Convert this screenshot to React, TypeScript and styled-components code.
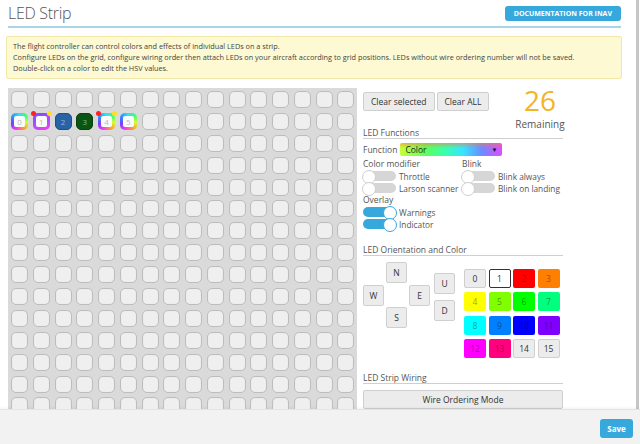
import React from "react";
import styled, { createGlobalStyle, css } from "styled-components";

const GlobalStyle = createGlobalStyle`
  html, body {
    margin: 0;
    padding: 0;
    background: #ffffff;
    font-family: "Open Sans", "Liberation Sans", sans-serif;
    color: #555;
  }
  * { box-sizing: border-box; }
`;

const Page = styled.div`
  width: 640px;
  height: 444px;
  display: flex;
  flex-direction: column;
  overflow: hidden;
`;

const Main = styled.div`
  flex: 1;
  display: flex;
  min-height: 0;
`;

const Content = styled.div`
  flex: 1;
  overflow: hidden;
`;

const ScrollBar = styled.div`
  width: 3px;
  margin-right: 1px;
  background: #c6c6c6;
`;

const Header = styled.div`
  margin: 0 15px 0 8px;
  height: 28px;
  display: flex;
  align-items: center;
  justify-content: space-between;
  border-bottom: 2px solid #a9d4e6;
`;

const Title = styled.h1`
  margin: 0;
  font-size: 16px;
  font-weight: 300;
  color: #555;
  letter-spacing: -0.3px;
`;

const DocButton = styled.a`
  background: #37a8db;
  color: #fff;
  font-size: 7px;
  font-weight: 700;
  text-transform: uppercase;
  padding: 0 9px;
  height: 15px;
  line-height: 15px;
  border-radius: 3px;
  text-decoration: none;
`;

const Notice = styled.div`
  margin: 8px 14px 0 6px;
  padding: 4px 6px;
  background: #fdf9d2;
  border: 1px solid #f1e7a6;
  border-radius: 2px;
  font-size: 7.3px;
  line-height: 11px;
  color: #444;
`;

const Body = styled.div`
  display: flex;
  gap: 6px;
  margin-top: 9px;
  padding-left: 8px;
  align-items: flex-start;
`;

const Grid = styled.div`
  background: #dadada;
  padding: 3px;
  display: grid;
  grid-template-columns: repeat(16, 17px);
  column-gap: 4.75px;
  row-gap: 4.9px;
  width: 349px;
`;

const rainbow = css`
  background: conic-gradient(from 200deg, #ff3cf0, #7d3cff, #2f8cff, #2fe0ff, #37ff7a, #d6ff2f, #ff9a2f, #ff3cf0);
  border: none;
  padding: 3px;
`;

const Cell = styled.div<{ $kind?: string }>`
  position: relative;
  width: 17px;
  height: 17px;
  border-radius: 5px;
  border: 1px solid #bdbdbd;
  background: #efefef;
  box-shadow: inset 0 0 1px rgba(0, 0, 0, 0.08);
  display: flex;
  align-items: center;
  justify-content: center;
  font-size: 8px;
  ${(p) => p.$kind === "rainbow" && rainbow}
  ${(p) =>
    p.$kind === "purple" &&
    css`
      background: linear-gradient(160deg, #7a4cff, #b14cff 55%, #ff3cf4);
      border: none;
      padding: 3px;
    `}
  ${(p) =>
    p.$kind === "blue" &&
    css`
      background: #2763a6;
      border-color: #1d4f87;
      color: #8fb6e4;
    `}
  ${(p) =>
    p.$kind === "green" &&
    css`
      background: #0b5512;
      border-color: #08420d;
      color: #7ebd80;
    `}
`;

const LedInner = styled.span`
  width: 100%;
  height: 100%;
  background: #fbfbfb;
  border-radius: 2px;
  color: #b8b8b8;
  font-size: 8px;
  display: flex;
  align-items: center;
  justify-content: center;
`;

const Dot = styled.span<{ $side: "left" | "right"; $color: string }>`
  position: absolute;
  top: -2px;
  ${(p) => (p.$side === "left" ? "left: -2px;" : "right: -2px;")}
  width: 5px;
  height: 5px;
  border-radius: 50%;
  background: ${(p) => p.$color};
`;

const Panel = styled.div`
  width: 202px;
  padding-top: 4px;
  display: flex;
  flex-direction: column;
  font-size: 8.5px;
`;

const TopRow = styled.div`
  height: 37px;
  display: flex;
  justify-content: space-between;
  align-items: flex-start;
`;

const BtnGroup = styled.div`
  display: flex;
  gap: 2px;
`;

const Button = styled.button`
  font-family: inherit;
  font-size: 8.5px;
  color: #333;
  background: #ececec;
  border: 1px solid #cfcfcf;
  border-radius: 2px;
  height: 19px;
  padding: 0 7px;
  cursor: pointer;
`;

const Remaining = styled.div`
  display: flex;
  flex-direction: column;
  align-items: center;
  margin-top: -7px;
  width: 50px;
`;

const Big = styled.div`
  font-size: 28px;
  font-weight: 400;
  color: #f3b425;
  line-height: 30px;
`;

const Small = styled.div`
  font-size: 10px;
  line-height: 12px;
  margin-top: 3px;
  color: #555;
`;

const SectionTitle = styled.div<{ $top: number }>`
  margin-top: ${(p) => p.$top}px;
  font-size: 8.5px;
  line-height: 10px;
  color: #555;
  border-bottom: 1px solid #cfcfcf;
  width: 200px;
`;

const FuncRow = styled.div`
  display: flex;
  align-items: center;
  gap: 3px;
  margin-top: 4px;
  height: 13px;
  font-size: 8.5px;
`;

const ColorSelect = styled.div`
  width: 102px;
  height: 13px;
  border-radius: 2px;
  background: linear-gradient(180deg, rgba(255, 120, 60, 0.55), rgba(255, 255, 255, 0) 40%),
    linear-gradient(90deg, #c9ff3a 0%, #5dff5a 25%, #37ffb0 45%, #37e4ff 62%, #6a8cff 80%, #e24cff 100%);
  display: flex;
  align-items: center;
  justify-content: space-between;
  padding: 0 5px;
  font-size: 8.5px;
  color: #222;
`;

const Arrow = styled.span`
  font-size: 6px;
  color: #111;
`;

const Options = styled.div`
  display: grid;
  grid-template-columns: 99px 1fr;
  margin-top: 2px;
`;

const OptCol = styled.div`
  display: flex;
  flex-direction: column;
`;

const SubLabel = styled.div`
  font-size: 8.5px;
  line-height: 12px;
  color: #555;
`;

const ToggleRow = styled.label`
  display: flex;
  align-items: center;
  gap: 3px;
  height: 12px;
  font-size: 8.3px;
  color: #555;
  white-space: nowrap;
`;

const Switch = styled.span<{ $on?: boolean }>`
  position: relative;
  width: 33px;
  height: 10px;
  border-radius: 6px;
  background: ${(p) => (p.$on ? "#37a8db" : "#d6d6d6")};
  flex: none;
  &::after {
    content: "";
    position: absolute;
    top: -1px;
    ${(p) => (p.$on ? "right: -1px;" : "left: -1px;")}
    width: 12px;
    height: 12px;
    border-radius: 50%;
    background: #fff;
    border: 1px solid ${(p) => (p.$on ? "#37a8db" : "#cfcfcf")};
  }
`;

const OrientRow = styled.div`
  display: flex;
  align-items: flex-start;
  margin-top: 6px;
`;

const DirPad = styled.div`
  display: grid;
  grid-template-columns: repeat(3, 21px);
  grid-template-rows: repeat(3, 21px);
  column-gap: 2px;
  row-gap: 1.5px;
  width: 67px;
`;

const DirButton = styled.div<{ $col: number; $row: number }>`
  grid-column: ${(p) => p.$col};
  grid-row: ${(p) => p.$row};
  background: #ececec;
  border: 1px solid #cfcfcf;
  border-radius: 2px;
  font-size: 8.5px;
  color: #333;
  display: flex;
  align-items: center;
  justify-content: center;
`;

const UpDown = styled.div`
  display: flex;
  flex-direction: column;
  gap: 6px;
  margin-top: 11px;
  margin-left: 4px;
`;

const UDButton = styled.div`
  width: 21px;
  height: 21px;
  background: #ececec;
  border: 1px solid #cfcfcf;
  border-radius: 2px;
  font-size: 8.5px;
  color: #333;
  display: flex;
  align-items: center;
  justify-content: center;
`;

const ColorGrid = styled.div`
  display: grid;
  grid-template-columns: repeat(4, 22px);
  grid-auto-rows: 19px;
  column-gap: 2.5px;
  row-gap: 4.3px;
  margin-left: 9px;
  margin-top: 7px;
`;

const Swatch = styled.div<{ $bg: string; $plain?: boolean; $selected?: boolean }>`
  background: ${(p) => p.$bg};
  border: 1px solid ${(p) => (p.$selected ? "#333" : p.$plain ? "#cfcfcf" : "transparent")};
  border-radius: 2px;
  font-size: 8.5px;
  color: ${(p) => (p.$plain ? "#333" : "rgba(0,0,0,0.4)")};
  display: flex;
  align-items: center;
  justify-content: center;
`;

const WideButton = styled(Button)`
  width: 200px;
  margin-top: 6px;
  height: 19px;
`;

const Footer = styled.div`
  height: 35px;
  background: #f2f2f2;
  border-top: 1px solid #e4e4e4;
  box-shadow: 0 -1px 3px rgba(0, 0, 0, 0.06);
  display: flex;
  align-items: center;
  justify-content: flex-end;
  padding-right: 7px;
`;

const SaveButton = styled.button`
  font-family: inherit;
  background: #37a8db;
  color: #fff;
  font-weight: 700;
  font-size: 8px;
  border: none;
  border-radius: 3px;
  width: 33px;
  height: 19px;
  margin-top: 3px;
`;

const swatches = [
  { bg: "#ececec", plain: true },
  { bg: "#ffffff", plain: true, selected: true },
  { bg: "#ff0000" },
  { bg: "#ff7f00" },
  { bg: "#ffff00" },
  { bg: "#7fff00" },
  { bg: "#00ff00" },
  { bg: "#00ff7f" },
  { bg: "#00ffff" },
  { bg: "#007fff" },
  { bg: "#0000ff" },
  { bg: "#7f00ff" },
  { bg: "#ff00ff" },
  { bg: "#ff007f" },
  { bg: "#ececec", plain: true },
  { bg: "#ececec", plain: true },
];

const renderLed = (i: number) => {
  if (i === 16) return <Cell key={i} $kind="rainbow"><LedInner>0</LedInner></Cell>;
  if (i === 17)
    return (
      <Cell key={i} $kind="purple">
        <LedInner>1</LedInner>
        <Dot $side="left" $color="#ff2020" />
        <Dot $side="right" $color="#ffe020" />
      </Cell>
    );
  if (i === 18) return <Cell key={i} $kind="blue">2</Cell>;
  if (i === 19) return <Cell key={i} $kind="green">3</Cell>;
  if (i === 20)
    return (
      <Cell key={i} $kind="rainbow">
        <LedInner>4</LedInner>
        <Dot $side="left" $color="#ff2020" />
        <Dot $side="right" $color="#ffe020" />
      </Cell>
    );
  if (i === 21) return <Cell key={i} $kind="rainbow"><LedInner>5</LedInner></Cell>;
  return <Cell key={i} />;
};

export default function App() {
  return (
    <Page>
      <GlobalStyle />
      <Main>
        <Content>
          <Header>
            <Title>LED Strip</Title>
            <DocButton href="#">Documentation for INAV</DocButton>
          </Header>
          <Notice>
            The flight controller can control colors and effects of individual LEDs on a strip.
            <br />
            Configure LEDs on the grid, configure wiring order then attach LEDs on your aircraft according to grid positions. LEDs without wire ordering number will not be saved.
            <br />
            Double-click on a color to edit the HSV values.
          </Notice>
          <Body>
            <Grid>{Array.from({ length: 256 }, (_, i) => renderLed(i))}</Grid>
            <Panel>
              <TopRow>
                <BtnGroup>
                  <Button>Clear selected</Button>
                  <Button>Clear ALL</Button>
                </BtnGroup>
                <Remaining>
                  <Big>26</Big>
                  <Small>Remaining</Small>
                </Remaining>
              </TopRow>
              <SectionTitle $top={-1}>LED Functions</SectionTitle>
              <FuncRow>
                Function
                <ColorSelect>
                  Color <Arrow>▼</Arrow>
                </ColorSelect>
              </FuncRow>
              <Options>
                <OptCol>
                  <SubLabel>Color modifier</SubLabel>
                  <ToggleRow><Switch />Throttle</ToggleRow>
                  <ToggleRow><Switch />Larson scanner</ToggleRow>
                </OptCol>
                <OptCol>
                  <SubLabel>Blink</SubLabel>
                  <ToggleRow><Switch />Blink always</ToggleRow>
                  <ToggleRow><Switch />Blink on landing</ToggleRow>
                </OptCol>
              </Options>
              <SubLabel>Overlay</SubLabel>
              <ToggleRow><Switch $on />Warnings</ToggleRow>
              <ToggleRow><Switch $on />Indicator</ToggleRow>
              <SectionTitle $top={15}>LED Orientation and Color</SectionTitle>
              <OrientRow>
                <DirPad>
                  <DirButton $col={2} $row={1}>N</DirButton>
                  <DirButton $col={1} $row={2}>W</DirButton>
                  <DirButton $col={3} $row={2}>E</DirButton>
                  <DirButton $col={2} $row={3}>S</DirButton>
                </DirPad>
                <UpDown>
                  <UDButton>U</UDButton>
                  <UDButton>D</UDButton>
                </UpDown>
                <ColorGrid>
                  {swatches.map((s, i) => (
                    <Swatch key={i} $bg={s.bg} $plain={s.plain} $selected={s.selected}>
                      {i}
                    </Swatch>
                  ))}
                </ColorGrid>
              </OrientRow>
              <SectionTitle $top={15}>LED Strip Wiring</SectionTitle>
              <WideButton>Wire Ordering Mode</WideButton>
            </Panel>
          </Body>
        </Content>
        <ScrollBar />
      </Main>
      <Footer>
        <SaveButton>Save</SaveButton>
      </Footer>
    </Page>
  );
}
